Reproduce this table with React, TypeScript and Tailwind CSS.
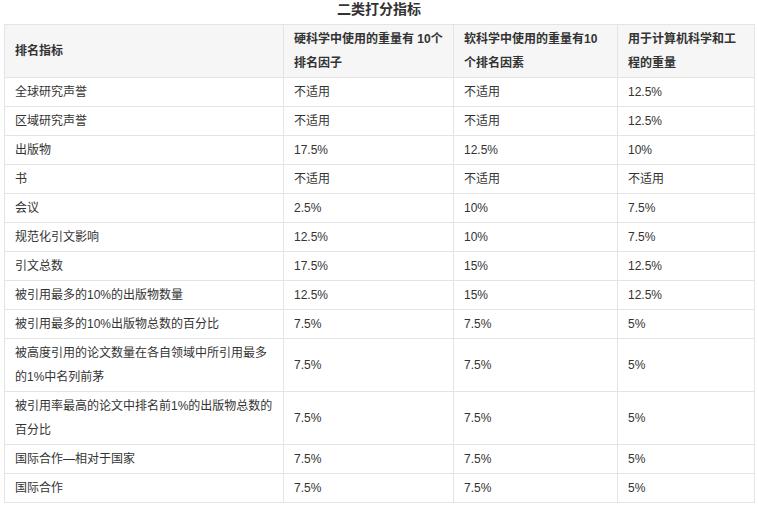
const rows: [React.ReactNode, string, string, string][] = [
  ["全球研究声誉", "不适用", "不适用", "12.5%"],
  ["区域研究声誉", "不适用", "不适用", "12.5%"],
  ["出版物", "17.5%", "12.5%", "10%"],
  ["书", "不适用", "不适用", "不适用"],
  ["会议", "2.5%", "10%", "7.5%"],
  ["规范化引文影响", "12.5%", "10%", "7.5%"],
  ["引文总数", "17.5%", "15%", "12.5%"],
  ["被引用最多的10%的出版物数量", "12.5%", "15%", "12.5%"],
  ["被引用最多的10%出版物总数的百分比", "7.5%", "7.5%", "5%"],
  [
    <>
      被高度引用的论文数量在各自领域中所引用最多
      <br />
      的1%中名列前茅
    </>,
    "7.5%",
    "7.5%",
    "5%",
  ],
  [
    <>
      被引用率最高的论文中排名前1%的出版物总数的
      <br />
      百分比
    </>,
    "7.5%",
    "7.5%",
    "5%",
  ],
  ["国际合作—相对于国家", "7.5%", "7.5%", "5%"],
  ["国际合作", "7.5%", "7.5%", "5%"],
];

const cell = "border border-[#e4e4e4] px-[10px] py-[2px] leading-[24px] align-middle text-left";

export default function App() {
  return (
    <div
      className="w-[758px] h-[507px] bg-white text-[#333333] overflow-hidden"
      style={{ fontFamily: '"Liberation Sans", "Noto Sans CJK SC", sans-serif' }}
    >
      <div className="text-center font-bold text-[14px] leading-[18px] pt-0 mb-[6px] text-[#333333]">
        二类打分指标
      </div>
      <table className="ml-[4px] w-[750px] border-collapse table-fixed text-[12px]">
        <colgroup>
          <col className="w-[279px]" />
          <col className="w-[170px]" />
          <col className="w-[164px]" />
          <col className="w-[137px]" />
        </colgroup>
        <thead>
          <tr className="bg-[#f6f6f6] font-bold">
            <th className={cell + " font-bold"}>排名指标</th>
            <th className={cell + " font-bold"}>
              硬科学中使用的重量有 10个
              <br />
              排名因子
            </th>
            <th className={cell + " font-bold"}>
              软科学中使用的重量有10
              <br />
              个排名因素
            </th>
            <th className={cell + " font-bold"}>
              用于计算机科学和工
              <br />
              程的重量
            </th>
          </tr>
        </thead>
        <tbody>
          {rows.map((r, i) => (
            <tr key={i}>
              <td className={cell}>{r[0]}</td>
              <td className={cell}>{r[1]}</td>
              <td className={cell}>{r[2]}</td>
              <td className={cell}>{r[3]}</td>
            </tr>
          ))}
        </tbody>
      </table>
    </div>
  );
}
